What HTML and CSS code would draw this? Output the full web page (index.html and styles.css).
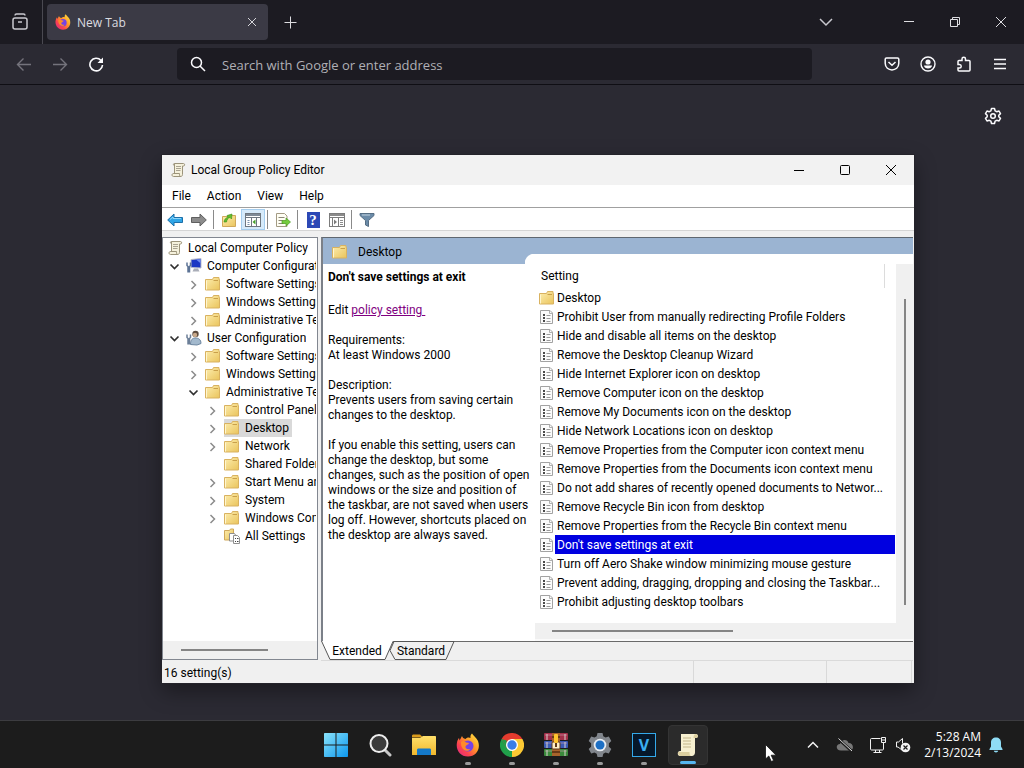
FILE: index.html
```html
<!DOCTYPE html>
<html lang="en">

<head>
    <meta charset="UTF-8">
    <meta name="viewport" content="width=device-width, initial-scale=1.0">
    <title>Local Group Policy Editor</title>
    <link rel="stylesheet" href="styles.css">
</head>

<body>
    <!-- Shared icons -->
    <svg class="icon-defs" aria-hidden="true">
        <defs>
            <linearGradient id="foldFill" x1="0" y1="0" x2="1" y2="1">
                <stop offset="0" stop-color="#fdeeb0" />
                <stop offset="1" stop-color="#eac45c" />
            </linearGradient>
            <linearGradient id="fireFill" x1="1" y1="0" x2="0" y2="1">
                <stop offset="0" stop-color="#fff04a" />
                <stop offset="0.4" stop-color="#ff9a26" />
                <stop offset="0.7" stop-color="#fb4150" />
                <stop offset="1" stop-color="#d9258f" />
            </linearGradient>
            <linearGradient id="winFill" x1="0" y1="0" x2="1" y2="1">
                <stop offset="0" stop-color="#8ae3fb" />
                <stop offset="1" stop-color="#0c97ee" />
            </linearGradient>
            <linearGradient id="fileFill" x1="0" y1="0" x2="0" y2="1">
                <stop offset="0" stop-color="#ffe06b" />
                <stop offset="1" stop-color="#f0b72c" />
            </linearGradient>
            <symbol id="folder" viewBox="0 0 16 16">
                <path d="M.5 3.500h7l1-2h5.500v2h.5v10.500h-14z" fill="url(#foldFill)" stroke="#d9b260" />
                <path d="M8.500 4.500h4.500" stroke="#c9a04b" />
                <path d="M1.500 4.500v9" stroke="#fff6cf" />
            </symbol>
            <symbol id="scroll" viewBox="0 0 16 16">
                <path d="M4.500 1.500h9c1.500 0 1.500 2.500 0 2.500h-1v8.500c0 1.500-1 2-2 2h-7c-2 0-2-3 0-3h1z" fill="#f5f1dc" stroke="#9b937a" />
                <path d="M4.500 1.500c-1.500 0-1.500 2 0 2M3.500 11.500h6c0 2 0 3 1.500 3" fill="none" stroke="#9b937a" />
                <path d="M6 4.500h5M6 6.500h5M6 8.500h4.500" stroke="#a9a392" />
            </symbol>
            <symbol id="policy" viewBox="0 0 16 16">
                <path d="M1.500 1.500h9.500l2.500 2.500v10.500h-12z" fill="#fcfcfc" stroke="#a2a2a2" />
                <path d="M10.500 1.500v3h3" fill="none" stroke="#b0b0b0" />
                <path d="M4 5h2v2h-2zM4 8h2v2h-2zM4 11h2v2h-2z" fill="#4a4a4a" />
                <path d="M7.500 6.500h4M7.500 9.500h4M7.500 12.500h4" stroke="#9c9c9c" />
            </symbol>
            <symbol id="computer" viewBox="0 0 16 16">
                <path d="M5 1.500l10-1v9.500l-10-.5z" fill="#1b37c4" stroke="#b9bdcb" />
                <path d="M10 1.500l4.500-.3v4z" fill="#6f8cf2" />
                <path d="M8 10.500h4l1.500 3h-7z" fill="#a9adb8" />
                <path d="M1 4.500v3l1 1v6M4.500 4.500v3l-1 1v6" fill="none" stroke="#5c7395" stroke-width="1.500" />
            </symbol>
            <symbol id="user" viewBox="0 0 16 16">
                <circle cx="9.500" cy="4" r="3.200" fill="#5b4b3f" />
                <circle cx="9" cy="5" r="2.200" fill="#caa98a" />
                <path d="M4.500 14.500c0-5 2-6.500 5-6.500s5.500 1.500 5.500 5.500l-4 1.500z" fill="#a3b9cd" stroke="#6d86a0" />
                <path d="M1 4.500v3l1 1v6M4.500 4.500v3l-1 1v6" fill="none" stroke="#6c7f98" stroke-width="1.500" />
            </symbol>
            <symbol id="all" viewBox="0 0 16 16">
                <path d="M.5 2.500h5l1-1.500h3v11h-9z" fill="url(#foldFill)" stroke="#cfa85a" />
                <path d="M5.500 5.500h5l1 1.500v6h-6z" fill="#fff" stroke="#8f8f8f" />
                <path d="M9.500 7.500h4l2 2v6h-6z" fill="#fff" stroke="#8f8f8f" />
                <path d="M11 10.500h1M11 13.500h1M13 10.500h1.500M13 13.500h1.500" stroke="#444" />
            </symbol>
            <symbol id="closed" viewBox="0 0 16 16">
                <path d="M5.500 5l4 4-4 4" fill="none" stroke="#8b8b8b" stroke-width="1.500" />
            </symbol>
            <symbol id="open" viewBox="0 0 16 16">
                <path d="M3.500 6.500l4 4 4-4" fill="none" stroke="#303030" stroke-width="1.700" />
            </symbol>
            <symbol id="firefox" viewBox="0 0 24 24">
                <path d="M16 0.500c1 2 4.500 4 6 7.500 3 8-2 15.500-10 15.500s-12.500-7-11-14c.3-2 1.200-3.500 2-4.500l.6 2.500 2.400-4.500c.5 1.500 1.500 2.500 3.500 3 2-2 4-1.500 5-1-.3-2 .2-3.500 1.500-4.500z" fill="url(#fireFill)" />
                <circle cx="12" cy="13" r="5.500" fill="#7542e5" />
                <path d="M5 9c2-2 4-1 5 .5l3 .5c-.5 2-3 1.800-3.500 3.500s2 3.500 5 2.500c-3 4-10 1.500-9.500-7z" fill="#ff8a2a" />
            </symbol>
        </defs>
    </svg>

    <div class="browser">
        <header class="tab-strip">
            <button class="view-button" aria-label="Firefox View">
                <svg width="18" height="18" viewBox="0 0 18 18" fill="none" stroke="#c9c9cf" stroke-width="1.500">
                    <path d="M3 2.500c0-1 .5-1.500 1.500-1.500h7c1 0 1.500.5 1.500 1.500" />
                    <rect x="1" y="5" width="14" height="11" rx="2" />
                    <path d="M6 9h4" />
                </svg>
            </button>
            <div class="tab">
                <svg width="16" height="16"><use href="#firefox" /></svg>
                <span class="tab-title">New Tab</span>
                <button class="tab-close" aria-label="Close tab">
                    <svg width="10" height="10" viewBox="0 0 10 10" stroke="#d5d5da"><path d="M1 1l8 8M9 1l-8 8" /></svg>
                </button>
            </div>
            <button class="new-tab" aria-label="New tab">
                <svg width="13" height="13" viewBox="0 0 13 13" stroke="#dcdce0"><path d="M6.500 .5v12M.5 6.500h12" /></svg>
            </button>
            <div class="window-buttons">
                <button class="list-tabs" aria-label="List all tabs">
                    <svg width="14" height="14" viewBox="0 0 14 14" fill="none" stroke="#c9c9cf" stroke-width="1.500"><path d="M1 4l6 6 6-6" /></svg>
                </button>
                <button aria-label="Minimize">
                    <svg width="10" height="10" viewBox="0 0 10 10" stroke="#dedee2"><path d="M0 4.500h10" /></svg>
                </button>
                <button aria-label="Restore">
                    <svg width="10" height="10" viewBox="0 0 10 10" fill="none" stroke="#dedee2"><path d="M.5 2.500h7v7h-7zM2.500 2.500v-2h7v7h-2" /></svg>
                </button>
                <button aria-label="Close">
                    <svg width="10" height="10" viewBox="0 0 10 10" stroke="#dedee2"><path d="M0 0l10 10M10 0l-10 10" /></svg>
                </button>
            </div>
        </header>

        <div class="nav-bar">
            <div class="nav-buttons">
                <button aria-label="Back">
                    <svg width="16" height="16" viewBox="0 0 16 16" fill="none" stroke="#74737c" stroke-width="1.400"><path d="M15 8.500h-13M7.500 2.500l-6 6 6 6" /></svg>
                </button>
                <button aria-label="Forward">
                    <svg width="16" height="16" viewBox="0 0 16 16" fill="none" stroke="#74737c" stroke-width="1.400"><path d="M1 8.500h13M8.500 2.500l6 6-6 6" /></svg>
                </button>
                <button aria-label="Reload">
                    <svg width="16" height="16" viewBox="0 0 16 16" fill="none" stroke="#fbfbfe" stroke-width="1.600"><path d="M13 4.500a6.300 6.300 0 1 0 1.500 4.500" /><path d="M15 1.500v5.500h-5.500z" fill="#fbfbfe" stroke="none" /></svg>
                </button>
            </div>
            <label class="url-bar">
                <svg width="16" height="16" viewBox="0 0 16 16" fill="none" stroke="#fbfbfe" stroke-width="1.500"><circle cx="6.500" cy="6.500" r="5" /><path d="M10 10l5 5" /></svg>
                <input type="text" placeholder="Search with Google or enter address" aria-label="Search with Google or enter address">
            </label>
            <div class="nav-tools">
                <button aria-label="Save to Pocket">
                    <svg width="16" height="16" viewBox="0 0 16 16" fill="none" stroke="#fbfbfe" stroke-width="1.500"><path d="M2.500 2h11c.8 0 1.300.5 1.300 1.300v4c0 8.800-13.600 8.800-13.600 0v-4c0-.8.500-1.300 1.300-1.300zM4.500 6l3.500 3.300 3.500-3.300" /></svg>
                </button>
                <button aria-label="Account">
                    <svg width="16" height="16" viewBox="0 0 16 16" fill="#fbfbfe"><circle cx="8" cy="8" r="7" fill="none" stroke="#fbfbfe" stroke-width="1.400" /><circle cx="8" cy="6" r="2.600" /><path d="M4 9.500h8c0 4-8 4-8 0z" /></svg>
                </button>
                <button aria-label="Extensions">
                    <svg width="16" height="16" viewBox="0 0 16 16" fill="none" stroke="#fbfbfe" stroke-width="1.500"><path d="M2 8.500v-3c0-.6.400-1 1-1h3v-1.500c0-2.300 3.500-2.300 3.500 0v1.500h3.500c.6 0 1 .4 1 1v8.500c0 .6-.4 1-1 1h-10c-.6 0-1-.4-1-1v-2h1.500c2.300 0 2.300-3.500 0-3.500z" /></svg>
                </button>
                <button aria-label="Menu">
                    <svg width="14" height="14" viewBox="0 0 14 14" stroke="#fbfbfe" stroke-width="1.400"><path d="M1 2.500h12M1 7h12M1 11.500h12" /></svg>
                </button>
            </div>
        </div>

        <main class="page">
            <button class="page-settings" aria-label="Personalize new tab">
                <svg width="18" height="18" viewBox="0 0 18 18" fill="none" stroke="#fbfbfe" stroke-width="1.500" stroke-linejoin="round"><path d="M7.500 1.500h3l.6 2.300 1.600.9 2.300-.7 1.500 2.600-1.700 1.600v1.600l1.700 1.600-1.500 2.600-2.300-.7-1.600.9-.6 2.300h-3l-.6-2.300-1.600-.9-2.300.7-1.500-2.600 1.700-1.600v-1.600l-1.700-1.600 1.500-2.600 2.300.7 1.600-.9z" /><circle cx="9" cy="9" r="2.300" /></svg>
            </button>
        </main>
    </div>

    <section class="editor">
        <header class="title-bar">
            <svg width="16" height="16"><use href="#scroll" /></svg>
            <h1>Local Group Policy Editor</h1>
            <div class="editor-buttons">
                <button aria-label="Minimize">
                    <svg width="12" height="12" viewBox="0 0 12 12" stroke="#000"><path d="M1 6.500h10" /></svg>
                </button>
                <button aria-label="Maximize">
                    <svg width="12" height="12" viewBox="0 0 12 12" fill="none" stroke="#000"><rect x="1.500" y="1.500" width="9" height="9" rx="1" /></svg>
                </button>
                <button aria-label="Close">
                    <svg width="12" height="12" viewBox="0 0 12 12" stroke="#000"><path d="M1 1l10 10M11 1l-10 10" /></svg>
                </button>
            </div>
        </header>

        <nav class="menu-bar">
            <button>File</button>
            <button>Action</button>
            <button>View</button>
            <button>Help</button>
        </nav>

        <div class="toolbar">
            <button aria-label="Back">
                <svg width="16" height="16" viewBox="0 0 16 16"><path d="M.7 8l6.300-6v3.500h8.500v5h-8.500v3.500z" fill="#2fa5e6" stroke="#1d6fa8" /><path d="M3 7.500l3-2.500v1.500h8" fill="none" stroke="#8fd6fa" /></svg>
            </button>
            <button aria-label="Forward">
                <svg width="16" height="16" viewBox="0 0 16 16"><path d="M15.300 8l-6.300-6v3.500h-8.500v5h8.500v3.500z" fill="#8c8c8c" stroke="#5f5f5f" /></svg>
            </button>
            <span class="tool-line"></span>
            <button aria-label="Up one level">
                <svg width="16" height="16" viewBox="0 0 16 16"><path d="M1.500 4.500h5l1-1h7v11h-13z" fill="url(#foldFill)" stroke="#cfa85a" /><path d="M3 10c.5-3 2-4.500 4-4.500l-1-2 5-1.500-.5 5-1.500-1.500c-2 .3-3 2-3.500 4.500z" fill="#5fbf2c" stroke="#3c8c17" stroke-width=".6" /></svg>
            </button>
            <button class="pressed" aria-label="Show/Hide Console Tree">
                <svg width="16" height="16" viewBox="0 0 16 16"><rect x=".5" y="1.500" width="15" height="13" fill="#fff" stroke="#6f7780" /><path d="M1 3h14" stroke="#7f8a96" stroke-width="2" /><path d="M1 5.500h14M6.500 5.500v9M11.500 5.500v9" stroke="#6f7780" /><path d="M2.500 8.500h2M2.500 10.500h2M2.500 12.500h2" stroke="#7b93ad" /><path d="M10.500 7.500v5l-3-2.500z" fill="#46a02c" /></svg>
            </button>
            <span class="tool-line"></span>
            <button aria-label="Export List">
                <svg width="16" height="16" viewBox="0 0 16 16"><path d="M1.500 1.500h8l2.500 2.500v10.500h-10.500z" fill="#fffef4" stroke="#a39b84" /><path d="M3.500 5.500h6M3.500 8.500h4M3.500 11.500h5" stroke="#8b8777" /><path d="M7 8.500h4v-2.500l4.500 4-4.500 4v-2.500h-4z" fill="#76cc3e" stroke="#4c9a20" stroke-width=".7" /></svg>
            </button>
            <span class="tool-line"></span>
            <button aria-label="Help">
                <span class="help-icon">?</span>
            </button>
            <button aria-label="Show/Hide Action Pane">
                <svg width="16" height="16" viewBox="0 0 16 16"><rect x=".5" y="1.500" width="15" height="13" fill="#fff" stroke="#7c7c7c" /><path d="M1 3h14" stroke="#8b8b8b" stroke-width="2" /><path d="M1 5.500h14M3.500 5.500v9M9.500 5.500v9" stroke="#7c7c7c" /><path d="M11 8.500h3M11 10.500h3M11 12.500h3" stroke="#8c8c8c" /><path d="M5 7.500v5l3-2.500z" fill="#7c7c7c" /></svg>
            </button>
            <span class="tool-line"></span>
            <button aria-label="Filter">
                <svg width="16" height="16" viewBox="0 0 16 16"><path d="M1 1.500h14v2l-5.500 5v6l-3-1.500v-4.500l-5.500-5z" fill="#6b8ba8" stroke="#566e84" /><path d="M3 3h8" stroke="#c3d3e0" /></svg>
            </button>
        </div>

        <div class="panes">
            <nav class="tree">
                <ul>
                    <li class="root"><svg><use href="#scroll" /></svg><span>Local Computer Policy</span></li>
                    <li class="level-1"><svg><use href="#open" /></svg><svg><use href="#computer" /></svg><span>Computer Configuration</span></li>
                    <li class="level-2"><svg><use href="#closed" /></svg><svg><use href="#folder" /></svg><span>Software Settings</span></li>
                    <li class="level-2"><svg><use href="#closed" /></svg><svg><use href="#folder" /></svg><span>Windows Settings</span></li>
                    <li class="level-2"><svg><use href="#closed" /></svg><svg><use href="#folder" /></svg><span>Administrative Templates</span></li>
                    <li class="level-1"><svg><use href="#open" /></svg><svg><use href="#user" /></svg><span>User Configuration</span></li>
                    <li class="level-2"><svg><use href="#closed" /></svg><svg><use href="#folder" /></svg><span>Software Settings</span></li>
                    <li class="level-2"><svg><use href="#closed" /></svg><svg><use href="#folder" /></svg><span>Windows Settings</span></li>
                    <li class="level-2"><svg><use href="#open" /></svg><svg><use href="#folder" /></svg><span>Administrative Templates</span></li>
                    <li class="level-3"><svg><use href="#closed" /></svg><svg><use href="#folder" /></svg><span>Control Panel</span></li>
                    <li class="level-3 current"><svg><use href="#closed" /></svg><svg><use href="#folder" /></svg><span>Desktop</span></li>
                    <li class="level-3"><svg><use href="#closed" /></svg><svg><use href="#folder" /></svg><span>Network</span></li>
                    <li class="level-3"><svg></svg><svg><use href="#folder" /></svg><span>Shared Folders</span></li>
                    <li class="level-3"><svg><use href="#closed" /></svg><svg><use href="#folder" /></svg><span>Start Menu and Taskbar</span></li>
                    <li class="level-3"><svg><use href="#closed" /></svg><svg><use href="#folder" /></svg><span>System</span></li>
                    <li class="level-3"><svg><use href="#closed" /></svg><svg><use href="#folder" /></svg><span>Windows Components</span></li>
                    <li class="level-3"><svg></svg><svg><use href="#all" /></svg><span>All Settings</span></li>
                </ul>
                <div class="tree-scroll"><span></span></div>
            </nav>

            <div class="result">
                <div class="result-body">
                    <section class="detail">
                        <h2><svg width="16" height="16"><use href="#folder" /></svg>Desktop</h2>
                        <div class="detail-text">
                            <h3>Don't save settings at exit</h3>
                            <p>Edit <a href="#">policy setting&nbsp;</a></p>
                            <p>Requirements:<br>At least Windows 2000</p>
                            <p>Description:<br>Prevents users from saving certain<br>changes to the desktop.</p>
                            <p>If you enable this setting, users can<br>change the desktop, but some<br>changes, such as the position of open<br>windows or the size and position of<br>the taskbar, are not saved when users<br>log off. However, shortcuts placed on<br>the desktop are always saved.</p>
                        </div>
                    </section>

                    <section class="list">
                        <div class="list-cap"></div>
                        <div class="list-main">
                            <div class="list-rows">
                                <table>
                                    <colgroup>
                                        <col class="icon-col">
                                        <col>
                                    </colgroup>
                                    <thead>
                                        <tr><th colspan="2"><div>Setting</div></th></tr>
                                    </thead>
                                    <tbody>
                                        <tr><td><svg><use href="#folder" /></svg></td><td><span>Desktop</span></td></tr>
                                        <tr><td><svg><use href="#policy" /></svg></td><td><span>Prohibit User from manually redirecting Profile Folders</span></td></tr>
                                        <tr><td><svg><use href="#policy" /></svg></td><td><span>Hide and disable all items on the desktop</span></td></tr>
                                        <tr><td><svg><use href="#policy" /></svg></td><td><span>Remove the Desktop Cleanup Wizard</span></td></tr>
                                        <tr><td><svg><use href="#policy" /></svg></td><td><span>Hide Internet Explorer icon on desktop</span></td></tr>
                                        <tr><td><svg><use href="#policy" /></svg></td><td><span>Remove Computer icon on the desktop</span></td></tr>
                                        <tr><td><svg><use href="#policy" /></svg></td><td><span>Remove My Documents icon on the desktop</span></td></tr>
                                        <tr><td><svg><use href="#policy" /></svg></td><td><span>Hide Network Locations icon on desktop</span></td></tr>
                                        <tr><td><svg><use href="#policy" /></svg></td><td><span>Remove Properties from the Computer icon context menu</span></td></tr>
                                        <tr><td><svg><use href="#policy" /></svg></td><td><span>Remove Properties from the Documents icon context menu</span></td></tr>
                                        <tr><td><svg><use href="#policy" /></svg></td><td><span>Do not add shares of recently opened documents to Networ...</span></td></tr>
                                        <tr><td><svg><use href="#policy" /></svg></td><td><span>Remove Recycle Bin icon from desktop</span></td></tr>
                                        <tr><td><svg><use href="#policy" /></svg></td><td><span>Remove Properties from the Recycle Bin context menu</span></td></tr>
                                        <tr class="selected"><td><svg><use href="#policy" /></svg></td><td><span>Don't save settings at exit</span></td></tr>
                                        <tr><td><svg><use href="#policy" /></svg></td><td><span>Turn off Aero Shake window minimizing mouse gesture</span></td></tr>
                                        <tr><td><svg><use href="#policy" /></svg></td><td><span>Prevent adding, dragging, dropping and closing the Taskbar...</span></td></tr>
                                        <tr><td><svg><use href="#policy" /></svg></td><td><span>Prohibit adjusting desktop toolbars</span></td></tr>
                                    </tbody>
                                </table>
                            </div>
                            <div class="list-vscroll"><span></span></div>
                        </div>
                        <div class="list-hscroll"><span></span></div>
                    </section>
                </div>

                <div class="view-tabs">
                    <svg class="tab-shapes" width="136" height="20" viewBox="0 0 136 20">
                        <path d="M73 .5h60l-8 18h-51l-5-9z" fill="#f0f0f0" stroke="#555" />
                        <path d="M0 0l9 18.500h55l8-18.500z" fill="#fff" />
                        <path d="M.5 0l8.500 18.500h55l8-18" fill="none" stroke="#555" />
                    </svg>
                    <button>Extended</button>
                    <button>Standard</button>
                </div>
            </div>
        </div>

        <footer class="status-bar">
            <span class="status-text">16 setting(s)</span>
            <span class="status-cell"></span>
            <span class="status-cell small"></span>
        </footer>
    </section>

    <footer class="taskbar">
        <div class="apps">
            <button aria-label="Start">
                <svg width="24" height="24" viewBox="0 0 24 24" fill="url(#winFill)"><path d="M0 1c0-.6.4-1 1-1h10.500v11.500h-11.500zM12.500 0h10.500c.6 0 1 .4 1 1v10.500h-11.500zM0 12.500h11.500v11.500h-10.500c-.6 0-1-.4-1-1zM12.500 12.500h11.500v10.500c0 .6-.4 1-1 1h-10.500z" /></svg>
            </button>
            <button aria-label="Search">
                <svg width="24" height="24" viewBox="0 0 24 24"><path d="M17 17l5 5" stroke="#c8c8c8" stroke-width="3" stroke-linecap="round" /><circle cx="11" cy="10.500" r="8.500" fill="#3b3b3b" stroke="#eee" stroke-width="2" /></svg>
            </button>
            <button aria-label="File Explorer">
                <svg width="24" height="24" viewBox="0 0 24 24"><path d="M0 3c0-1 .5-1.500 1.500-1.500h6.500l3 3h-11z" fill="#d99b1c" /><path d="M0 5h8l3-2h12c.6 0 1 .4 1 1v18h-24z" fill="url(#fileFill)" /><path d="M5 22v-5c0-1 .5-1.500 1.500-1.500h11c1 0 1.500.5 1.500 1.500v5z" fill="#1479c9" /></svg>
            </button>
            <button class="running" aria-label="Firefox">
                <svg width="24" height="24"><use href="#firefox" /></svg>
            </button>
            <button class="running" aria-label="Chrome">
                <svg width="24" height="24" viewBox="0 0 24 24"><path d="M12 12l-10.400-6a12 12 0 0 1 20.800 0z" fill="#e33b2e" /><path d="M12 12v12a12 12 0 0 1-10.400-18z" fill="#20a04a" /><path d="M12 12l10.400-6a12 12 0 0 1-10.400 18z" fill="#fcc934" /><path d="M12 6h10.400l-5.200 9z" fill="#fcc934" /><path d="M6.800 15l-5.200-9 10.400 0z" fill="#e33b2e" /><path d="M6.800 15l-5.200-9 5 1.500z" fill="#20a04a" /><circle cx="12" cy="12" r="6" fill="#fff" /><circle cx="12" cy="12" r="4.700" fill="#3a7de8" /></svg>
            </button>
            <button class="running" aria-label="WinRAR">
                <svg width="24" height="24" viewBox="0 0 24 24"><rect y="0" width="24" height="7" rx="1" fill="#a3304a" /><rect y="8" width="24" height="7" rx="1" fill="#3b5bb5" /><rect y="16" width="24" height="7" rx="1" fill="#3b8a3c" /><path d="M1 2h22M1 10h22M1 18h22" stroke="#d4a2b4" stroke-opacity=".6" /><path d="M21 1v6M21 9v6M21 17v6M3 1v6M3 9v6M3 17v6" stroke="#d8d0cc" /><rect x="8" y="0" width="8" height="23" fill="#a8642c" /><path d="M8 4h8M8 19h8" stroke="#693a17" stroke-width="2" /><rect x="8" y="9" width="8" height="7" rx="1" fill="#fff0c8" stroke="#5c3a1a" /><rect x="10" y="1" width="4" height="9" rx="1" fill="#ffc52e" /><path d="M12 10v4" stroke="#5c3a1a" stroke-width="2" /></svg>
            </button>
            <button class="running" aria-label="Settings">
                <svg width="24" height="24" viewBox="0 0 24 24"><path d="M9.500 0h5l.8 3.300 2.200 1.200 3.300-.9 2.500 4.300-2.400 2.400v3.400l2.400 2.400-2.500 4.300-3.300-.9-2.200 1.200-.8 3.300h-5l-.8-3.300-2.200-1.200-3.300.9-2.500-4.300 2.400-2.400v-3.400l-2.400-2.400 2.500-4.300 3.300.9 2.200-1.200z" fill="#81868c" /><circle cx="12" cy="12" r="6.300" fill="#e8edf2" /><circle cx="12" cy="12" r="4.500" fill="#1c6fc4" /></svg>
            </button>
            <button class="running" aria-label="VEGAS">
                <span class="vegas">V</span>
            </button>
            <button class="running active" aria-label="Local Group Policy Editor">
                <svg width="24" height="24" viewBox="0 0 24 24"><path d="M5 1h15c2.500 0 2.500 4 0 4h-1v14.500c0 2-1.500 3.500-3 3.500h-12c-3 0-3-5 0-5h1z" fill="#f7f0d0" /><path d="M17.500 5h2.500c2.500 0 2.500-4 0-4-1.700 0-2.500 1.500-2.500 4zM2 19c0 2.500 1 4 2.500 4h10.500c-1.500-1-1.500-2-1.500-4z" fill="#dccf9f" /><path d="M7 5h8M7 8h8M7 11h8M7 14h8" stroke="#c3b68b" /></svg>
            </button>
        </div>

        <div class="tray">
            <button aria-label="Show hidden icons">
                <svg width="12" height="12" viewBox="0 0 12 12" fill="none" stroke="#f2f2f2" stroke-width="1.500"><path d="M1 8.500l5-5 5 5" /></svg>
            </button>
            <svg class="cloud" width="18" height="16" viewBox="0 0 18 16"><path d="M5 13.500c-5.500 0-5.500-6.500-1-6.500 1.500-5 7.500-5 8.500-1 5.500 0 6 7.500 1 7.500z" fill="#777" /><path d="M2 1.500l14 13" stroke="#1c1c1c" stroke-width="3" /><path d="M2.500 1.500l13.500 12.500" stroke="#ddd" /></svg>
            <svg class="network" width="18" height="18" viewBox="0 0 18 18" fill="none" stroke="#f2f2f2"><path d="M11.500 2.500h-9c-.6 0-1 .4-1 1v9.500c0 .6.400 1 1 1h11c.6 0 1-.4 1-1v-6M6.500 14v2.500M10.500 14v2.500M4.500 16.500h8" /><path d="M12.500 1.500h4v5h-4zM12.500 4h4" /></svg>
            <svg width="16" height="16" viewBox="0 0 16 16" fill="none" stroke="#f2f2f2"><path d="M7 13l-4-3h-1.500v-5h2l4-3.500v5" /><circle cx="10.500" cy="10.500" r="4.800" fill="#f2f2f2" stroke="none" /><path d="M8.500 8.500l4 4M12.500 8.500l-4 4" stroke="#1c1c1c" stroke-width="1.200" /></svg>
            <div class="clock">5:28 AM<br>2/13/2024</div>
            <svg class="bell" width="14" height="16" viewBox="0 0 14 16" fill="#8fdcf5"><path d="M7 .5c3 0 5 2 5 5v4l1.500 2.500c.2.500 0 1-.5 1h-12c-.5 0-.7-.5-.5-1l1.500-2.500v-4c0-3 2-5 5-5zM4.800 13.800h4.400c-.5 2.200-3.900 2.200-4.400 0z" /></svg>
        </div>
    </footer>

    <svg class="cursor" width="12" height="18" viewBox="0 0 12 18"><path d="M.5.5v14.500l3.300-3 2.500 5.500 2.300-1-2.400-5.300h4.800z" fill="#fff" stroke="#111" stroke-width=".8" /></svg>
</body>

</html>
```
FILE: styles.css
```css
* {
    box-sizing: border-box;
}

body {
    margin: 0;
    height: 100vh;
    min-height: 640px;
    display: flex;
    flex-direction: column;
    position: relative;
    overflow: hidden;
    background: #2b2a33;
    color: #000;
    font-family: "Open Sans", "Noto Sans", sans-serif;
    font-size: 12px;
}

button {
    display: flex;
    align-items: center;
    justify-content: center;
    padding: 0;
    border: none;
    background: none;
    color: inherit;
    font: inherit;
}

svg {
    display: block;
    flex: none;
}

.icon-defs {
    position: absolute;
    width: 0;
    height: 0;
}

/* Browser */

.browser {
    flex: 1;
    display: flex;
    flex-direction: column;
}

.tab-strip {
    display: flex;
    align-items: center;
    height: 44px;
    background: #1c1b22;
}

.view-button {
    width: 43px;
    height: 44px;
    border-right: 1px solid #4a4951;
}

.tab {
    display: flex;
    align-items: center;
    gap: 6px;
    width: 221px;
    height: 36px;
    margin-left: 4px;
    padding: 0 6px 0 8px;
    border-radius: 4px;
    background: #3b3a45;
    color: #dcdce1;
}

.tab-title {
    flex: 1;
}

.tab-close {
    width: 20px;
    height: 20px;
}

.new-tab {
    width: 44px;
    height: 36px;
}

.window-buttons {
    display: flex;
    margin-left: auto;
}

.window-buttons button {
    width: 46px;
    height: 44px;
}

.window-buttons .list-tabs {
    margin-right: 37px;
}

.nav-bar {
    display: flex;
    align-items: center;
    justify-content: space-between;
    height: 41px;
    padding: 0 6px;
    background: #2b2a33;
    border-bottom: 1px solid #0f0e14;
}

.nav-buttons,
.nav-tools {
    display: flex;
}

.nav-buttons button,
.nav-tools button {
    width: 36px;
    height: 36px;
}

.url-bar {
    flex: 1;
    display: flex;
    align-items: center;
    gap: 16px;
    height: 32px;
    margin: 0 62px 0 63px;
    padding: 0 13px;
    border-radius: 4px;
    background: #1c1b22;
}

.url-bar input {
    flex: 1;
    padding: 2px 0 0;
    border: none;
    outline: none;
    background: none;
    color: #fbfbfe;
    font-family: inherit;
    font-size: 13px;
}

.url-bar input::placeholder {
    color: #b0b0b6;
    opacity: 1;
}

.page {
    flex: 1;
    display: flex;
    justify-content: flex-end;
    align-items: flex-start;
    padding: 15px;
}

.page-settings {
    width: 32px;
    height: 32px;
}

/* Policy editor window */

.editor {
    position: absolute;
    top: 155px;
    right: 110px;
    bottom: 85px;
    left: 162px;
    display: flex;
    flex-direction: column;
    background: #f0f0f0;
    box-shadow: 0 0 0 1px #24232a, 0 8px 20px rgba(0, 0, 0, 0.4);
    font-family: Roboto, "Open Sans", sans-serif;
}

.title-bar {
    display: flex;
    align-items: center;
    gap: 5px;
    height: 30px;
    padding-left: 8px;
    background: #f2f2f2;
}

.title-bar h1 {
    margin: 0;
    font-size: 12px;
    font-weight: normal;
}

.editor-buttons {
    display: flex;
    margin-left: auto;
}

.editor-buttons button {
    width: 46px;
    height: 30px;
}

.menu-bar {
    display: flex;
    gap: 16px;
    height: 22px;
    padding-left: 10px;
    background: #fff;
}

.toolbar {
    display: flex;
    align-items: center;
    height: 24px;
    padding: 1px 0 0 1px;
    border-top: 1px solid #a0a0a0;
    border-bottom: 1px solid #d5d5d5;
    background: #fff;
}

.toolbar button {
    width: 24px;
    height: 21px;
    border: 1px solid transparent;
}

.toolbar .pressed {
    border-color: #a5cdee;
    background: #d6eafa;
}

.tool-line {
    width: 1px;
    height: 19px;
    margin: 0 3px 0 2px;
    background: #8a8a8a;
}

.help-icon {
    width: 13px;
    height: 16px;
    background: #2c48b5;
    color: #fff;
    font-family: "Liberation Serif", serif;
    font-size: 15px;
    font-weight: bold;
    line-height: 16px;
}

.panes {
    flex: 1;
    display: flex;
    gap: 3px;
    min-height: 0;
    padding: 6px 1px 0 0;
}

.tree {
    display: flex;
    flex-direction: column;
    width: 156px;
    margin-bottom: 1px;
    border: 1px solid #828790;
    background: #fff;
}

.tree ul {
    flex: 1;
    min-height: 0;
    overflow: hidden;
    margin: 0;
    padding: 1px 1px 0 0;
    list-style: none;
}

.tree li {
    display: flex;
    align-items: center;
    height: 18px;
    line-height: 18px;
    white-space: nowrap;
}

.tree li svg {
    width: 16px;
    height: 16px;
}

.tree li svg + svg {
    margin-left: 3px;
}

.tree li span {
    min-width: 0;
    overflow: hidden;
    padding-left: 3px;
    margin-left: 2px;
}

.tree .root,
.tree .level-1 {
    padding-left: 4px;
}

.tree .level-2 {
    padding-left: 23px;
}

.tree .level-3 {
    padding-left: 42px;
}

.tree .current span {
    margin-left: 0;
    padding: 0 3px 0 5px;
    background: #d9d9d9;
}

.tree .current svg + svg {
    height: 18px;
    background: #d9d9d9;
}

.tree-scroll {
    display: flex;
    align-items: center;
    height: 18px;
    padding-left: 18px;
    background: #f0f0f0;
}

.tree-scroll span {
    width: 87px;
    height: 2px;
    background: #858585;
}

.result {
    flex: 1;
    display: flex;
    flex-direction: column;
    min-width: 0;
}

.result-body {
    flex: 1;
    display: flex;
    min-height: 0;
    border-top: 1px solid #5f6770;
    border-left: 2px solid #7b8088;
    background: #fff;
}

.detail {
    width: 212px;
}

.detail h2 {
    display: flex;
    align-items: center;
    gap: 10px;
    height: 26px;
    margin: 0;
    padding: 2px 0 0 9px;
    background: #9bb4d2;
    font-size: 12px;
    font-weight: normal;
}

.detail-text {
    padding: 6px 0 0 5px;
    line-height: 15px;
    white-space: nowrap;
}

.detail-text h3 {
    margin: 0 0 18px;
    font-size: 12px;
    line-height: 15px;
}

.detail-text p {
    margin: 0 0 15px;
}

.detail-text a {
    color: #800080;
}

.list {
    flex: 1;
    display: flex;
    flex-direction: column;
    min-width: 0;
}

.list-cap {
    height: 26px;
    margin-left: -10px;
    border-top: 16px solid #9bb4d2;
    background: radial-gradient(circle at 10px 10px, #fff 10px, #9bb4d2 11px) 0 0 / 10px 10px no-repeat #fff;
}

.list-main {
    flex: 1;
    display: flex;
    align-items: flex-start;
    min-height: 0;
}

.list-rows {
    flex: 1;
    min-width: 0;
}

.list table {
    width: 100%;
    table-layout: fixed;
    border-collapse: collapse;
}

.icon-col {
    width: 20px;
}

.list th {
    padding: 0 11px 0 0;
    text-align: left;
    font-weight: normal;
}

.list th div {
    height: 24px;
    padding-left: 6px;
    border-right: 1px solid #dcdcdc;
    line-height: 24px;
}

.list td {
    height: 19px;
    padding: 0;
    white-space: nowrap;
}

.list td:first-child {
    padding-left: 4px;
}

.list td svg {
    width: 16px;
    height: 16px;
}

.list td span {
    display: block;
    margin-right: 1px;
    padding: 1px 0 0 2px;
    line-height: 18px;
}

.list .selected span {
    background: #0000e0;
    color: #fff;
}

.list-vscroll {
    align-self: stretch;
    display: flex;
    width: 17px;
    padding: 35px 0 18px 8px;
    background: #f0f0f0;
}

.list-vscroll span {
    width: 2px;
    background: #858585;
}

.list-hscroll {
    display: flex;
    align-items: center;
    height: 18px;
    padding-left: 17px;
    border-bottom: 2px solid #fafafa;
    background: #f0f0f0;
}

.list-hscroll span {
    width: 50%;
    height: 2px;
    background: #858585;
}

.view-tabs {
    position: relative;
    display: flex;
    align-items: center;
    height: 20px;
    padding-left: 4px;
    border-top: 1px solid #6a6a6a;
    border-bottom: 1px solid #dadada;
}

.view-tabs button {
    position: relative;
    width: 64px;
}

.tab-shapes {
    position: absolute;
    top: -1px;
    left: 0;
}

.status-bar {
    display: flex;
    height: 22px;
    padding: 0 2px;
}

.status-text {
    flex: 1;
    line-height: 24px;
}

.status-cell {
    width: 133px;
    border-left: 1px solid #d9d9d9;
}

.status-cell.small {
    width: 86px;
    border-right: 1px solid #d9d9d9;
}

/* Taskbar */

.taskbar {
    display: grid;
    grid-template-columns: 1fr auto 1fr;
    align-items: center;
    height: 48px;
    border-top: 1px solid #3c3c40;
    background: #1c1c1c;
    color: #fff;
}

.apps {
    grid-column: 2;
    display: flex;
    gap: 4px;
}

.apps button {
    position: relative;
    width: 40px;
    height: 40px;
    border-radius: 4px;
}

.apps .active {
    border: 1px solid #343434;
    background: #2b2b2b;
}

.apps .running::after {
    content: "";
    position: absolute;
    bottom: 0;
    left: 50%;
    width: 6px;
    height: 3px;
    margin-left: -3px;
    border-radius: 2px;
    background: #9a9a9a;
}

.apps .active::after {
    width: 16px;
    margin-left: -8px;
    background: #56b5ee;
}

.vegas {
    width: 24px;
    height: 24px;
    border: 1px solid #34a9ea;
    background: #06182a;
    color: #3bb0f2;
    font-size: 16px;
    font-weight: bold;
    line-height: 22px;
}

.tray {
    display: flex;
    align-items: center;
    justify-content: flex-end;
    padding-right: 21px;
}

.cloud {
    margin-left: 17px;
}

.network {
    margin: 0 8px 0 15px;
}

.clock {
    margin: 0 8px 0 13px;
    line-height: 16px;
    text-align: right;
}

.cursor {
    position: absolute;
    right: 247px;
    bottom: 6px;
}
```
